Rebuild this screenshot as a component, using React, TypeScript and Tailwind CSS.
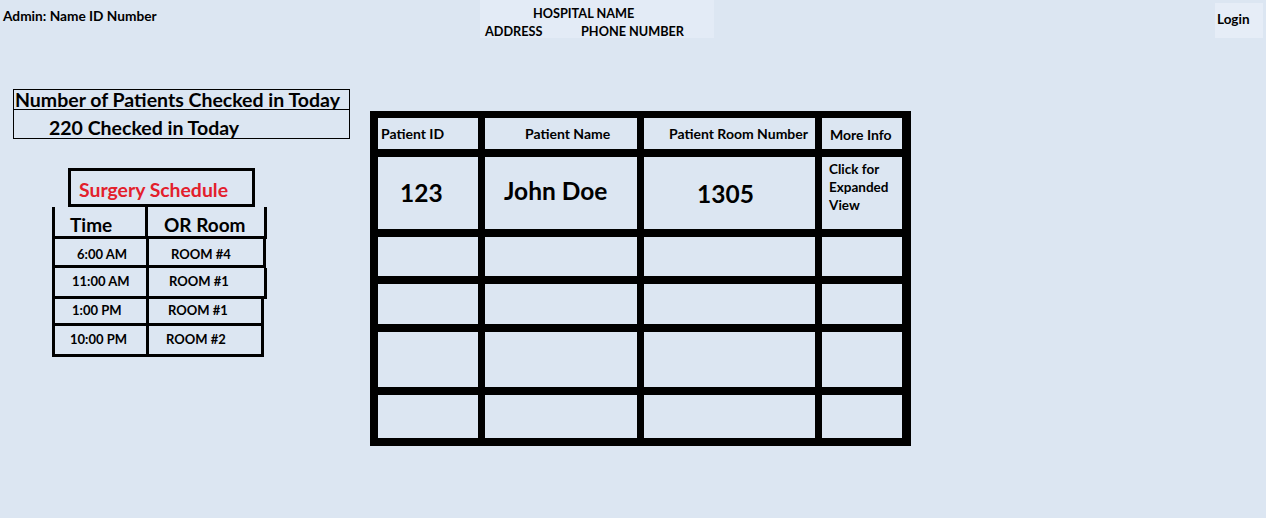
const font = { fontFamily: "Lato, 'Open Sans', sans-serif" };

const schedule = [
  { time: "6:00 AM", room: "ROOM #4", w: "w-[214px]", h: "h-[29px]", tp: "pl-[22px] pt-[5px]", rp: "pl-[22px] pt-[5px]" },
  { time: "11:00 AM", room: "ROOM #1", w: "w-[215px]", h: "h-[31px]", tp: "pl-[17px]", rp: "pl-[20px]" },
  { time: "1:00 PM", room: "ROOM #1", w: "w-[212px]", h: "h-[27px]", tp: "pl-[17px]", rp: "pl-[19px]" },
  { time: "10:00 PM", room: "ROOM #2", w: "w-[212px]", h: "h-[31px]", tp: "pl-[15px]", rp: "pl-[17px]" },
];

function Cell({ children, className = "" }: { children?: React.ReactNode; className?: string }) {
  return <div className={`bg-[#dce6f2] text-black font-bold ${className}`}>{children}</div>;
}

export default function App() {
  return (
    <div className="w-[1266px] h-[518px] bg-[#dce6f2] text-black overflow-hidden" style={font}>
      <div className="flex h-[38px] items-start">
        <div className="w-[480px] pl-[3px] pt-[6px] text-[13.7px] font-bold">Admin: Name ID Number</div>
        <div className="w-[234px] h-[38px] bg-[#e3ebf6] text-[12.7px] font-bold leading-[18px] pt-[4px]">
          <div className="pl-[53px]">HOSPITAL NAME</div>
          <div className="flex pl-[5px]">
            <span className="w-[96px]">ADDRESS</span>
            <span>PHONE NUMBER</span>
          </div>
        </div>
        <div className="ml-auto mr-[3px] mt-[3px] w-[48px] h-[35px] bg-[#e6edf7] text-[13.5px] font-bold pl-[2px] pt-[6px]">
          Login
        </div>
      </div>

      <div className="flex">
        <div className="ml-[13px] mt-[51px] w-[337px]">
          <div className="border border-black">
            <div className="h-[20px] border-b border-black text-[19.5px] font-bold leading-[20px] pl-[1px]">
              Number of Patients Checked in Today
            </div>
            <div className="h-[28px] text-[19.5px] font-bold leading-[28px] pl-[35px] pt-[4px]">220 Checked in Today</div>
          </div>

          <div className="ml-[39px] mt-[29px]">
            <div className="ml-[16px] w-[187px] h-[39px] border-[3px] border-black text-[19.4px] font-bold text-[#e3202c] pl-[8px] leading-[37px]">
              Surgery Schedule
            </div>
            <div className="flex w-[215px] h-[32px] border-[3px] border-t-0 border-black">
              <div className="w-[93px] border-r-[3px] border-black text-[19px] font-bold pl-[15px] leading-[36px]">Time</div>
              <div className="flex-1 text-[19px] font-bold pl-[16px] leading-[36px]">OR Room</div>
            </div>
            {schedule.map((r) => (
              <div key={r.time} className={`flex ${r.w} ${r.h} border-[3px] border-t-0 border-black text-[13px] font-bold items-center`}>
                <div className={`w-[94px] h-full border-r-[3px] border-black flex items-center ${r.tp}`}>{r.time}</div>
                <div className={`flex-1 ${r.rp}`}>{r.room}</div>
              </div>
            ))}
          </div>
        </div>

        <div className="ml-[20px] mt-[73px]">
          <div className="grid grid-cols-[100px_152px_171px_80px] grid-rows-[31px_72px_39px_40px_55px_43px] gap-x-[7px] gap-y-[8px] bg-black pt-[7px] pl-[8px] pr-[8px] pb-[8px] w-[541px]">
            <Cell className="text-[14px] leading-[31px] pl-[3px]">Patient ID</Cell>
            <Cell className="text-[14px] leading-[31px] pl-[40px]">Patient Name</Cell>
            <Cell className="text-[14px] leading-[31px] pl-[25px]">Patient Room Number</Cell>
            <Cell className="text-[14px] leading-[33px] pl-[8px]">More Info</Cell>

            <Cell className="text-[24.5px] pl-[22px] pt-[18px]">123</Cell>
            <Cell className="text-[24.5px] pl-[19px] pt-[16px]">John Doe</Cell>
            <Cell className="text-[24.5px] pl-[53px] pt-[19px]">1305</Cell>
            <Cell className="text-[13.5px] leading-[18px] pl-[7px] pt-[3px]">
              Click for
              <br />
              Expanded
              <br />
              View
            </Cell>

            {Array.from({ length: 16 }).map((_, i) => (
              <Cell key={i} />
            ))}
          </div>
        </div>
      </div>
    </div>
  );
}
